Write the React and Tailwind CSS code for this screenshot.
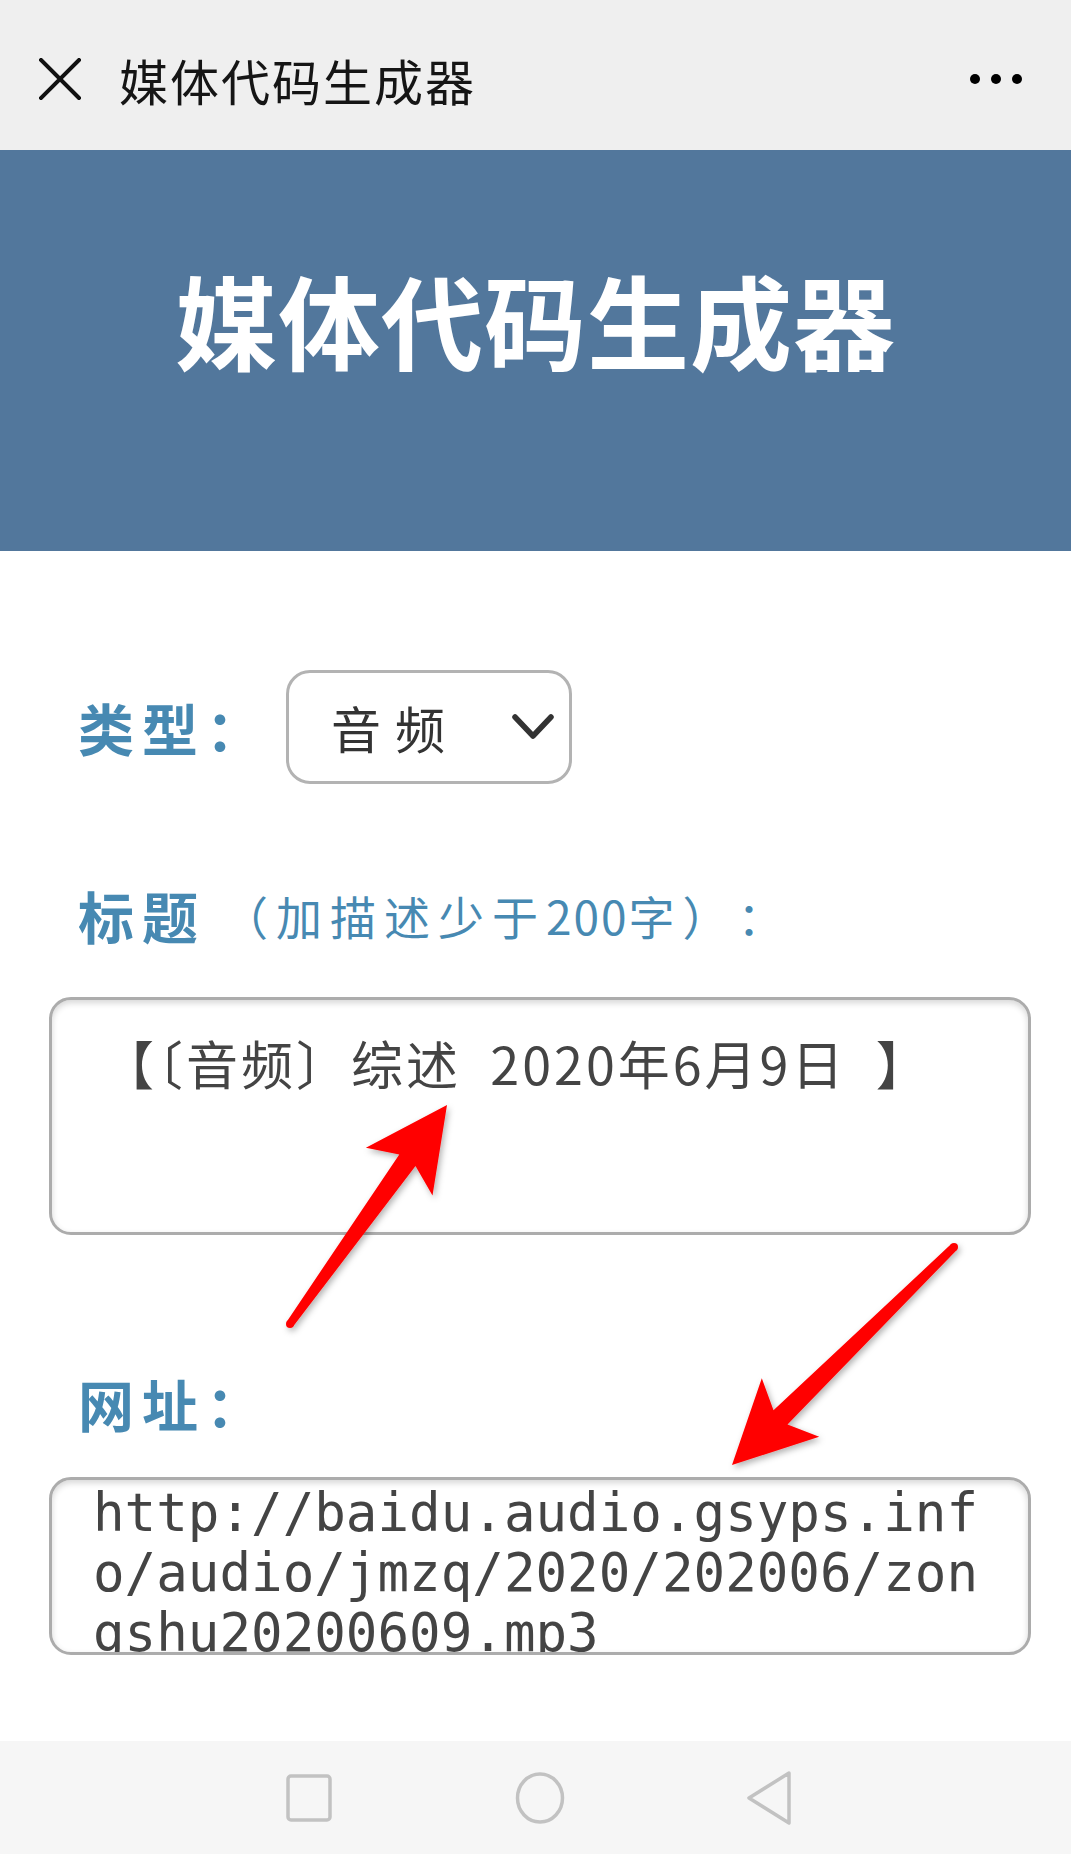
import React from "react";

const cjk = "font-['Noto_Sans_CJK_SC',sans-serif]";

// red annotation arrow, tip and tail in page pixels
const arrowPoints = (tip, tail, headLen = 82, headHalf = 41, neckHalf = 10, tailHalf = 4) => {
  const dx = tip[0] - tail[0];
  const dy = tip[1] - tail[1];
  const len = Math.hypot(dx, dy);
  const ux = dx / len;
  const uy = dy / len;
  const nx = -uy;
  const ny = ux;
  const at = (d, w) => [tip[0] - ux * d + nx * w, tip[1] - uy * d + ny * w];
  const pts = [
    at(0, 0),
    at(headLen, headHalf),
    at(headLen - 14, neckHalf),
    [tail[0] + nx * tailHalf, tail[1] + ny * tailHalf],
    [tail[0] - nx * tailHalf, tail[1] - ny * tailHalf],
    at(headLen - 14, -neckHalf),
    at(headLen, -headHalf),
  ];
  return pts.map((p) => p.map((v) => v.toFixed(1)).join(",")).join(" ");
};

const Label = ({ children }) => (
  <span className={`${cjk} text-[56px] leading-[60px] font-bold tracking-[8px] text-[#4789b2]`}>
    {children}
  </span>
);

const App = () => {
  return (
    <div className="relative w-full min-h-screen bg-white">
      {/* top bar */}
      <div className="h-[150px] bg-[#efefef] flex items-center pt-[8px] pl-[39px] pr-[49px]">
        <svg width="42" height="42" viewBox="0 0 42 42">
          <path d="M2 2L40 40M40 2L2 40" stroke="#111" strokeWidth="4" strokeLinecap="square" />
        </svg>
        <span className={`${cjk} ml-[38px] text-[49px] leading-none tracking-[2px] text-[#151515]`}>
          媒体代码生成器
        </span>
        <svg className="ml-auto" width="52" height="12" viewBox="0 0 52 12">
          <circle cx="5" cy="6" r="5" fill="#000" />
          <circle cx="26" cy="6" r="5" fill="#000" />
          <circle cx="47" cy="6" r="5" fill="#000" />
        </svg>
      </div>

      {/* banner */}
      <div className="h-[401px] bg-[#52779c] pt-[118px]">
        <h1 className={`${cjk} text-center text-[102px] leading-[102px] font-bold tracking-[1px] text-white`}>
          媒体代码生成器
        </h1>
      </div>

      {/* type */}
      <div className="mt-[119px] h-[114px] flex items-center pl-[78px]">
        <div className="w-[208px]">
          <Label>类型：</Label>
        </div>
        <div className="w-[286px] h-[114px] border-[3px] border-[#b3b3b3] rounded-[24px] flex items-center pl-[42px] pr-[14px]">
          <span className={`${cjk} text-[50px] leading-none tracking-[14px] text-[#333]`}>音频</span>
          <svg className="ml-auto" width="44" height="28" viewBox="0 0 44 28">
            <path d="M4 4L22 23L40 4" fill="none" stroke="#333" strokeWidth="5.5" strokeLinecap="round" strokeLinejoin="round" />
          </svg>
        </div>
      </div>

      {/* title */}
      <div className="mt-[101px] h-[60px] flex items-center pl-[78px]">
        <Label>标题</Label>
        <span className={`${cjk} ml-[16px] text-[46px] leading-[60px] text-[#4789b2]`}>
          <span className="tracking-[8px]">（加描述少于</span>
          <span className="tracking-[2px]">200</span>
          <span className="tracking-[8px]">字）</span>
          <span className="ml-[24px]">：</span>
        </span>
      </div>
      <textarea
        readOnly
        defaultValue="【〔音频〕综述  2020年6月9日  】"
        className={`${cjk} block mt-[52px] ml-[49px] w-[982px] h-[238px] border-[3px] border-[#acacac] rounded-[22px] shadow-[inset_0_3px_6px_rgba(0,0,0,0.16)] pt-[27px] pl-[50px] pr-[20px] text-[52px] leading-[72px] tracking-[3px] text-[#444] resize-none outline-none overflow-hidden bg-white`}
      />

      {/* url */}
      <div className="mt-[138px] h-[60px] flex items-center pl-[78px]">
        <Label>网址：</Label>
      </div>
      <textarea
        readOnly
        defaultValue="http://baidu.audio.gsyps.info/audio/jmzq/2020/202006/zongshu20200609.mp3"
        className="block mt-[44px] ml-[49px] w-[982px] h-[178px] border-[3px] border-[#acacac] rounded-[22px] shadow-[inset_0_3px_6px_rgba(0,0,0,0.16)] pt-[3px] pl-[41px] pr-[44px] font-['DejaVu_Sans_Mono',monospace] text-[52.5px] leading-[60px] text-[#444] resize-none outline-none overflow-hidden bg-white"
      />

      {/* system nav */}
      <div className="mt-[86px] h-[113px] bg-[#f6f6f6] flex items-center pl-[286px]">
        <svg width="46" height="48" viewBox="0 0 46 48">
          <rect x="2" y="2" width="42" height="44" rx="3" fill="none" stroke="#c2c2c2" strokeWidth="3.5" />
        </svg>
        <svg className="ml-[183px]" width="50" height="52" viewBox="0 0 50 52">
          <ellipse cx="25" cy="26" rx="22.5" ry="24" fill="none" stroke="#c2c2c2" strokeWidth="3.5" />
        </svg>
        <svg className="ml-[181px]" width="46" height="54" viewBox="0 0 46 54">
          <path d="M43 2L3 27L43 52Z" fill="none" stroke="#c2c2c2" strokeWidth="3.5" strokeLinejoin="round" />
        </svg>
      </div>

      {/* annotation arrows */}
      <svg className="absolute left-0 top-0 pointer-events-none" width="1071" height="1854">
        <defs>
          <filter id="arrowShadow" x="-20%" y="-20%" width="140%" height="140%">
            <feDropShadow dx="2" dy="3" stdDeviation="3" floodColor="#000" floodOpacity="0.3" />
          </filter>
        </defs>
        <g fill="#ff0000" filter="url(#arrowShadow)">
          <polygon points={arrowPoints([447, 1105], [290, 1324])} />
          <circle cx="290" cy="1324" r="4" />
          <polygon points={arrowPoints([732, 1465], [954, 1247])} />
          <circle cx="954" cy="1247" r="4" />
        </g>
      </svg>
    </div>
  );
};

export default App;
